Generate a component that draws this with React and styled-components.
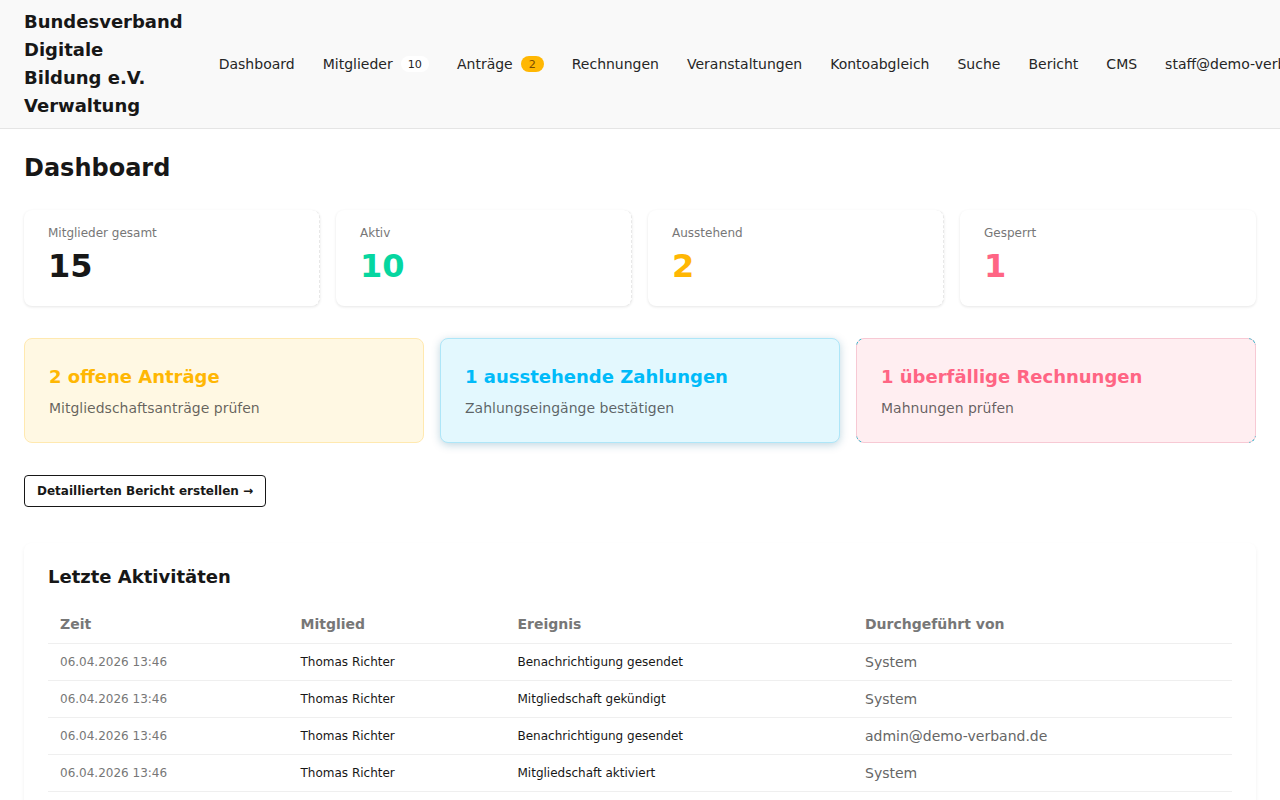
import styled, { createGlobalStyle } from "styled-components";

const navItems = [
  { label: "Dashboard" },
  { label: "Mitglieder", count: "10" },
  { label: "Anträge", count: "2", warn: true },
  { label: "Rechnungen" },
  { label: "Veranstaltungen" },
  { label: "Kontoabgleich" },
  { label: "Suche" },
  { label: "Bericht" },
  { label: "CMS" },
  { label: "staff@demo-verband.de" },
];

const stats = [
  { label: "Mitglieder gesamt", value: "15", color: "#171717", dashed: true },
  { label: "Aktiv", value: "10", color: "#06d6a0", dashed: true },
  { label: "Ausstehend", value: "2", color: "#ffb703", dashed: true },
  { label: "Gesperrt", value: "1", color: "#ff6584" },
];

const activities = [
  ["Benachrichtigung gesendet", "System"],
  ["Mitgliedschaft gekündigt", "System"],
  ["Benachrichtigung gesendet", "admin@demo-verband.de"],
  ["Mitgliedschaft aktiviert", "System"],
  ["Benachrichtigung gesendet", "System"],
];

export default function App() {
  return (
    <>
      <GlobalStyle />
      <Header>
        <Brand>Bundesverband Digitale Bildung e.V. Verwaltung</Brand>
        <Nav>
          {navItems.map((item) => (
            <NavLink key={item.label}>
              {item.label}
              {item.count && <NavBadge $warn={item.warn}>{item.count}</NavBadge>}
            </NavLink>
          ))}
        </Nav>
      </Header>
      <Main>
        <PageTitle>Dashboard</PageTitle>
        <StatGrid>
          {stats.map((stat) => (
            <StatCard key={stat.label} $dashed={stat.dashed}>
              <StatLabel>{stat.label}</StatLabel>
              <StatValue $color={stat.color}>{stat.value}</StatValue>
            </StatCard>
          ))}
        </StatGrid>
        <AlertGrid>
          <AlertCard $bg="#fff8e3" $border="#ffe9b0">
            <AlertTitle $color="#ffb703">2 offene Anträge</AlertTitle>
            <AlertText>Mitgliedschaftsanträge prüfen</AlertText>
          </AlertCard>
          <AlertCard $bg="#e3f8fe" $border="#aee6f8" $raised>
            <AlertTitle $color="#00bbf9">1 ausstehende Zahlungen</AlertTitle>
            <AlertText>Zahlungseingänge bestätigen</AlertText>
          </AlertCard>
          <AlertCard $bg="#ffeef1" $border="#f7c9d4" $corners>
            <AlertTitle $color="#ff6584">1 überfällige Rechnungen</AlertTitle>
            <AlertText>Mahnungen prüfen</AlertText>
          </AlertCard>
        </AlertGrid>
        <ReportButton>Detaillierten Bericht erstellen →</ReportButton>
        <ActivityCard>
          <ActivityTitle>Letzte Aktivitäten</ActivityTitle>
          <Table>
            <thead>
              <tr>
                <Th $width="240.5px">Zeit</Th>
                <Th $width="217px">Mitglied</Th>
                <Th $width="347.5px">Ereignis</Th>
                <Th>Durchgeführt von</Th>
              </tr>
            </thead>
            <tbody>
              {activities.map(([event, actor], i) => (
                <tr key={i}>
                  <TimeCell>06.04.2026 13:46</TimeCell>
                  <Td>Thomas Richter</Td>
                  <Td>{event}</Td>
                  <ActorCell>{actor}</ActorCell>
                </tr>
              ))}
            </tbody>
          </Table>
        </ActivityCard>
      </Main>
    </>
  );
}

const GlobalStyle = createGlobalStyle`
  * {
    box-sizing: border-box;
  }
  html, body {
    margin: 0;
    background: #fff;
    color: #171717;
    font-family: "DejaVu Sans", sans-serif;
    overflow-x: hidden;
  }
`;

const Header = styled.header`
  display: flex;
  align-items: center;
  gap: 36px;
  height: 129px;
  padding: 0 24px;
  background: #f9f9f9;
  border-bottom: 1px solid #e5e5e5;
`;

const Brand = styled.div`
  flex: 0 1 0;
  font-size: 18px;
  font-weight: 700;
  line-height: 28px;
  color: #171717;
`;

const Nav = styled.nav`
  display: flex;
  align-items: center;
  gap: 28px;
  flex-shrink: 0;
`;

const NavLink = styled.a`
  display: flex;
  align-items: center;
  gap: 8px;
  font-size: 14px;
  line-height: 20px;
  color: #262626;
  white-space: nowrap;
`;

const NavBadge = styled.span`
  display: inline-block;
  min-width: 23px;
  padding: 2px 7px 0;
  border-radius: 10px;
  background: ${(p) => (p.$warn ? "#ffb703" : "#fff")};
  color: ${(p) => (p.$warn ? "#7a4a00" : "#262626")};
  font-size: 11.2px;
  line-height: 14px;
  text-align: center;
`;

const Main = styled.main`
  padding: 24px;
`;

const PageTitle = styled.h1`
  margin: 0 0 27px;
  font-size: 24px;
  font-weight: 700;
  line-height: 30px;
`;

const StatGrid = styled.section`
  display: grid;
  grid-template-columns: repeat(4, 1fr);
  gap: 16px;
  margin-bottom: 32px;
`;

const StatCard = styled.div`
  height: 96px;
  padding: 16px 24px;
  background: #fff;
  border-radius: 8px;
  border-right: 1px ${(p) => (p.$dashed ? "dashed #e8e8e8" : "solid transparent")};
  box-shadow: 0 1px 3px rgba(0, 0, 0, 0.1);
`;

const StatLabel = styled.div`
  font-size: 12px;
  line-height: 14px;
  color: #777;
`;

const StatValue = styled.div`
  margin-top: 7px;
  font-size: 32px;
  font-weight: 700;
  line-height: 38px;
  color: ${(p) => p.$color};
`;

const AlertGrid = styled.section`
  display: grid;
  grid-template-columns: repeat(3, 1fr);
  gap: 16px;
  margin-bottom: 32px;
`;

const AlertCard = styled.div`
  position: relative;
  height: 105px;
  padding: 24px;
  background: ${(p) => p.$bg};
  border: 1px solid ${(p) => p.$border};
  border-radius: 8px;
  box-shadow: ${(p) => (p.$raised ? "0 2px 8px rgba(0, 90, 130, 0.25)" : "none")};

  /* teal dashes that show only round the corners of the card */
  ${(p) =>
    p.$corners &&
    `&::after {
      content: "";
      position: absolute;
      inset: -1px;
      border: 1px dashed #22b8cf;
      border-radius: 8px;
      -webkit-mask:
        linear-gradient(#000 0 0) top left / 7px 7px no-repeat,
        linear-gradient(#000 0 0) top right / 7px 7px no-repeat,
        linear-gradient(#000 0 0) bottom left / 7px 7px no-repeat,
        linear-gradient(#000 0 0) bottom right / 7px 7px no-repeat;
      mask:
        linear-gradient(#000 0 0) top left / 7px 7px no-repeat,
        linear-gradient(#000 0 0) top right / 7px 7px no-repeat,
        linear-gradient(#000 0 0) bottom left / 7px 7px no-repeat,
        linear-gradient(#000 0 0) bottom right / 7px 7px no-repeat;
    }`}
`;

const AlertTitle = styled.h3`
  margin: 0 0 7px;
  font-size: 18px;
  font-weight: 700;
  line-height: 28px;
  color: ${(p) => p.$color};
`;

const AlertText = styled.p`
  margin: 0;
  font-size: 14px;
  line-height: 20px;
  color: rgba(23, 23, 23, 0.68);
`;

const ReportButton = styled.button`
  display: block;
  height: 32px;
  margin-bottom: 36px;
  padding: 0 12px;
  background: #fff;
  border: 1px solid #171717;
  border-radius: 4px;
  color: #171717;
  font-family: inherit;
  font-size: 12px;
  font-weight: 700;
`;

const ActivityCard = styled.section`
  padding: 24px;
  background: #fff;
  border-radius: 8px;
  box-shadow: 0 2px 4px rgba(0, 0, 0, 0.06);
`;

const ActivityTitle = styled.h2`
  margin: 0 0 18px;
  font-size: 18px;
  font-weight: 700;
  line-height: 20px;
`;

const Table = styled.table`
  width: 100%;
  border-collapse: collapse;
  table-layout: fixed;
`;

const Th = styled.th`
  width: ${(p) => p.$width || "auto"};
  padding: 9px 12px;
  border-bottom: 1px solid #efefef;
  color: #777;
  font-size: 14px;
  font-weight: 700;
  line-height: 20px;
  text-align: left;
`;

const Td = styled.td`
  height: 37px;
  padding: 0 12px;
  border-bottom: 1px solid #efefef;
  color: #171717;
  font-size: 12px;
`;

const TimeCell = styled(Td)`
  color: #777;
`;

const ActorCell = styled(Td)`
  color: #666;
  font-size: 14px;
`;
